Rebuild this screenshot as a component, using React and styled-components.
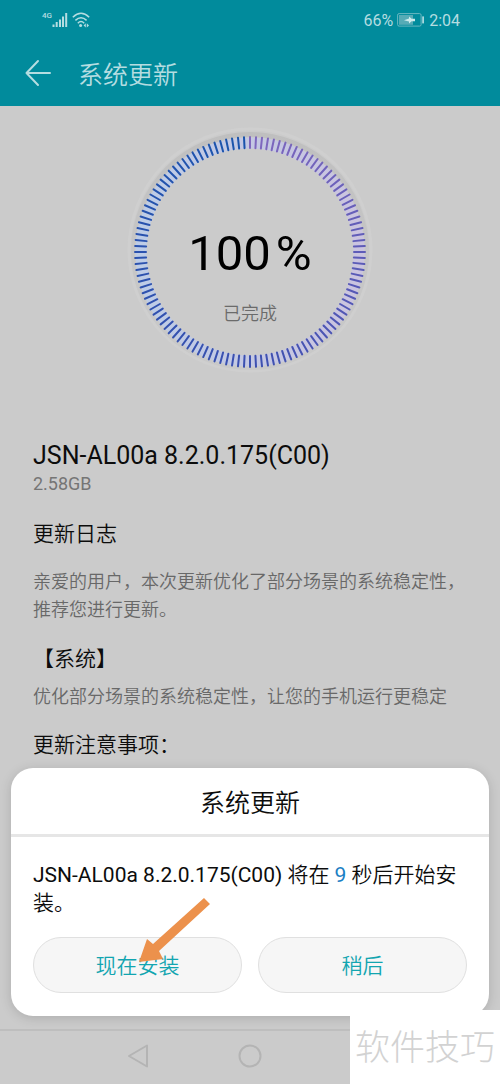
import styled, { createGlobalStyle } from "styled-components";

const TICKS = 120;
const FROM = [128, 104, 190];
const MIDDLE = [60, 80, 176];
const TO = [26, 84, 172];

function tickColor(i) {
  const t = i / (TICKS - 1);
  const [a, b, k] = t < 0.5 ? [FROM, MIDDLE, t * 2] : [MIDDLE, TO, t * 2 - 1];
  const mix = a.map((v, n) => Math.round(v + (b[n] - v) * k));
  return `rgb(${mix.join(",")})`;
}

function ProgressRing() {
  return (
    <svg width="260" height="260" viewBox="0 0 260 260" aria-hidden="true">
      <defs>
        <linearGradient id="shade" x1="0" y1="0" x2="0" y2="1">
          <stop offset="0" stopColor="#bfbfbf" />
          <stop offset="0.5" stopColor="#c6c6c6" />
          <stop offset="1" stopColor="#c9c9c9" />
        </linearGradient>
        <linearGradient id="glow" x1="0" y1="0" x2="1" y2="0">
          <stop offset="0" stopColor="#b9cdf0" />
          <stop offset="1" stopColor="#cbc2e6" />
        </linearGradient>
      </defs>
      <circle cx="130" cy="128" r="121" fill="none" stroke="#cfcfcf" strokeWidth="3" />
      <circle cx="130" cy="129" r="119" fill="url(#shade)" />
      <circle cx="130" cy="130" r="115" fill="#cbcbcb" />
      <circle cx="130" cy="130" r="109" fill="none" stroke="url(#glow)" strokeWidth="11" opacity="0.75" />
      {Array.from({ length: TICKS }, (_, i) => (
        <line
          key={i}
          x1="130"
          x2="130"
          y1="15"
          y2="26"
          stroke={tickColor(i)}
          strokeWidth="2"
          strokeLinecap="round"
          transform={`rotate(${(i * 360) / TICKS} 130 130)`}
        />
      ))}
    </svg>
  );
}

function SignalIcon() {
  return (
    <svg width="16" height="16" viewBox="0 0 16 16" fill="currentColor" aria-hidden="true">
      <rect x="0.5" y="12.5" width="2" height="2.5" />
      <rect x="3.7" y="10" width="2" height="5" />
      <rect x="7" y="7.5" width="2" height="7.5" />
      <rect x="10" y="4.5" width="2" height="10.5" />
      <rect x="13.2" y="1" width="2" height="14" />
    </svg>
  );
}

function WifiIcon() {
  return (
    <svg width="18" height="16" viewBox="0 0 18 16" fill="none" stroke="currentColor" strokeWidth="1.5" aria-hidden="true">
      <path d="M0.8 5.2Q9-2.6 17.2 5.2" />
      <path d="M3.4 8.4Q9 3 14.6 8.4" />
      <path d="M5.8 11.2Q9 8 12.2 11.2" />
      <circle cx="8.6" cy="13.5" r="1.5" fill="currentColor" stroke="none" />
      <path d="M13.8 11.3L11.6 13.4L13.8 15.5ZM14.8 11.3L17 13.4L14.8 15.5Z" fill="currentColor" stroke="none" />
    </svg>
  );
}

function BatteryIcon() {
  return (
    <svg width="28" height="14" viewBox="0 0 28 14" fill="none" aria-hidden="true">
      <rect x="0.6" y="0.6" width="23.5" height="12.5" rx="1.5" stroke="#6ab8c1" />
      <rect x="2" y="2" width="14" height="9.8" fill="#56abb6" />
      <path d="M7 7.2L12 5.6V3.6L14.6 5.8H18V8.2H14.6L12 10.4V8.4Z" fill="#cdeaec" />
      <rect x="25.2" y="3.4" width="1.8" height="7" fill="#a9d8dc" />
    </svg>
  );
}

function BackIcon() {
  return (
    <svg width="28" height="28" viewBox="0 0 28 28" fill="none" stroke="currentColor" strokeWidth="2" strokeLinecap="round" strokeLinejoin="round" aria-hidden="true">
      <path d="M26 14H2.5M14 2L2.5 14L14 26" />
    </svg>
  );
}

export default function App() {
  return (
    <>
      <GlobalStyle />
      <Screen>
        <Header>
          <StatusBar>
            <Network>4G</Network>
            <SignalIcon />
            <WifiIcon />
            <Battery>66%</Battery>
            <BatteryIcon />
            <Clock>2:04</Clock>
          </StatusBar>
          <Toolbar>
            <BackButton type="button" aria-label="返回">
              <BackIcon />
            </BackButton>
            <PageTitle>系统更新</PageTitle>
          </Toolbar>
        </Header>

        <Content>
          <Gauge>
            <ProgressRing />
            <GaugeText>
              <Percent>
                <span>100</span>
                <span>%</span>
              </Percent>
              <Status>已完成</Status>
            </GaugeText>
          </Gauge>
          <Version>JSN-AL00a 8.2.0.175(C00)</Version>
          <Size>2.58GB</Size>
          <Heading $top={24}>更新日志</Heading>
          <Paragraph $top={20}>
            亲爱的用户，本次更新优化了部分场景的系统稳定性，推荐您进行更新。
          </Paragraph>
          <Heading $top={21}>【系统】</Heading>
          <Paragraph $top={10}>
            优化部分场景的系统稳定性，让您的手机运行更稳定
          </Paragraph>
          <Heading $top={20}>更新注意事项：</Heading>
        </Content>

        <NavBar>
          <NavButton type="button" aria-label="后退">
            <svg width="22" height="26" viewBox="0 0 22 26" fill="none" stroke="#b4b4b4" strokeWidth="2" strokeLinejoin="round">
              <path d="M20 2.5V23.5L2 13Z" />
            </svg>
          </NavButton>
          <NavButton type="button" aria-label="主页">
            <svg width="24" height="24" viewBox="0 0 24 24" fill="none" stroke="#b4b4b4" strokeWidth="2">
              <circle cx="12" cy="12" r="10.5" />
            </svg>
          </NavButton>
          <NavButton type="button" aria-label="最近任务">
            <svg width="22" height="22" viewBox="0 0 22 22" fill="none" stroke="#b4b4b4" strokeWidth="2">
              <rect x="2" y="2" width="18" height="18" rx="1" />
            </svg>
          </NavButton>
        </NavBar>

        <Dialog role="dialog" aria-labelledby="dialog-title">
          <DialogTitle id="dialog-title">系统更新</DialogTitle>
          <DialogBody>
            <Message>
              <Model>JSN-AL00a 8.2.0.175(C00)</Model> 将在 <Seconds>9</Seconds> 秒后开始安装。
            </Message>
            <Actions>
              <ActionButton type="button">现在安装</ActionButton>
              <ActionButton type="button">稍后</ActionButton>
            </Actions>
          </DialogBody>
          <Pointer width="72" height="66" viewBox="0 0 72 66" aria-hidden="true">
            <path d="M0 65L8 42L14 47L65 1L71 7L20 54L24 62Z" fill="#ec914c" />
          </Pointer>
        </Dialog>

        <Watermark>软件技巧</Watermark>
      </Screen>
    </>
  );
}

const GlobalStyle = createGlobalStyle`
* {
  margin: 0;
  padding: 0;
  box-sizing: border-box;
}
body {
  background: #cbcbcb;
  color: #0c0c0c;
  font-family: Roboto, "Noto Sans CJK SC", sans-serif;
}
button {
  font: inherit;
  border: none;
  background: none;
  cursor: pointer;
}
svg {
  display: block;
}
`;

const Screen = styled.div`
  position: relative;
  display: flex;
  flex-direction: column;
  min-height: 100vh;
`;

const Header = styled.header`
  background: #018b9c;
  color: #b5dde1;
`;

const StatusBar = styled.div`
  display: flex;
  align-items: center;
  height: 40px;
  padding: 0 40px 0 42px;
  font-size: 16px;
`;

const Network = styled.span`
  align-self: flex-start;
  margin-top: 11px;
  font-size: 8px;
  line-height: 9px;
  font-weight: 500;

  & + svg {
    margin-right: 4px;
  }
`;

const Battery = styled.span`
  margin-left: auto;
  margin-right: 4px;
`;

const Clock = styled.span`
  margin-left: 4px;
`;

const Toolbar = styled.div`
  display: flex;
  align-items: center;
  gap: 26px;
  height: 66px;
  padding: 0 24px;
`;

const BackButton = styled.button`
  color: inherit;
`;

const PageTitle = styled.h1`
  padding-top: 6px;
  font-size: 25px;
  line-height: 32px;
  font-weight: 350;
`;

const Content = styled.main`
  flex: 1;
  padding: 16px 33px 0;
`;

const Gauge = styled.div`
  display: grid;
  place-items: center;
  margin-bottom: 58px;

  & > * {
    grid-area: 1 / 1;
  }
`;

const GaugeText = styled.div`
  padding-top: 48px;
  text-align: center;
`;

const Percent = styled.p`
  display: flex;
  gap: 5px;
  font-size: 49px;
  line-height: 60px;
  color: #000;
`;

const Status = styled.p`
  margin-top: 16px;
  font-size: 18px;
  line-height: 28px;
  font-weight: 350;
  color: #6b6b6b;
`;

const Version = styled.h2`
  font-size: 25px;
  line-height: 32px;
  font-weight: 400;
`;

const Size = styled.p`
  font-size: 18px;
  line-height: 24px;
  color: #757575;
`;

const Heading = styled.h3`
  margin-top: ${(props) => props.$top}px;
  font-size: 21px;
  line-height: 28px;
  font-weight: 350;
`;

const Paragraph = styled.p`
  margin-top: ${(props) => props.$top}px;
  font-size: 18px;
  line-height: 28px;
  font-weight: 350;
  color: #686868;
`;

const NavBar = styled.nav`
  display: flex;
  justify-content: center;
  align-items: center;
  gap: 88px;
  height: 55px;
  padding-bottom: 3px;
  border-top: 2px solid #bebebe;
`;

const NavButton = styled.button`
  display: grid;
  place-items: center;
  width: 24px;
  height: 28px;
`;

const Dialog = styled.section`
  position: absolute;
  left: 11px;
  right: 11px;
  bottom: 68px;
  border-radius: 22px;
  background: #fff;
  box-shadow: 0 2px 12px rgba(0, 0, 0, 0.15);
`;

const DialogTitle = styled.h2`
  padding: 20px 0 14px;
  border-bottom: 3px solid #e6e6e6;
  font-size: 25px;
  line-height: 32px;
  font-weight: 350;
  text-align: center;
`;

const DialogBody = styled.div`
  padding: 24px 22px 23px;
`;

const Message = styled.p`
  font-size: 21px;
  line-height: 28px;
  font-weight: 350;
`;

const Model = styled.span`
  font-weight: 400;
`;

const Seconds = styled.span`
  font-weight: 400;
  color: #1a80c4;
`;

const Actions = styled.div`
  display: grid;
  grid-template-columns: 1fr 1fr;
  gap: 16px;
  margin-top: 20px;
`;

const ActionButton = styled.button`
  height: 56px;
  padding-bottom: 2px;
  border: 1px solid #e0e0e0;
  border-radius: 28px;
  background: #f6f6f6;
  color: #12a5b0;
  font-size: 21px;
  font-weight: 350;
`;

const Pointer = styled.svg`
  position: absolute;
  left: 128px;
  bottom: 53px;
  pointer-events: none;
`;

const Watermark = styled.div`
  position: absolute;
  right: 0;
  bottom: 0;
  padding: 14px 5px 10px;
  background: #fff;
  color: #d2d2d2;
  font-size: 35px;
  line-height: 50px;
  font-weight: 300;
`;
